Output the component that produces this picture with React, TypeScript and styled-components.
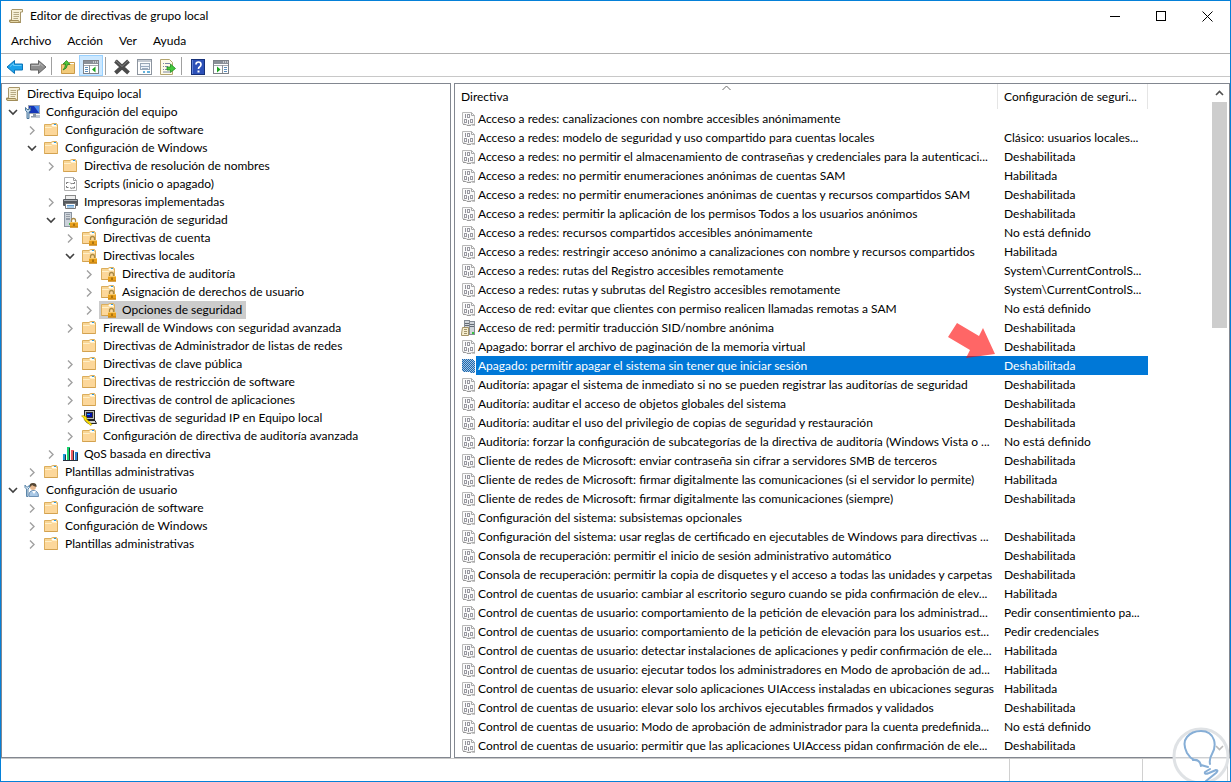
import React from "react";
import styled, { createGlobalStyle, css } from "styled-components";

const UI_FONT = 'Lato, "Noto Sans", sans-serif';

const GlobalStyle = createGlobalStyle`
  *, *::before, *::after { box-sizing: border-box; }
  body { margin: 0; background: #fff; }
  body, button { font-family: ${UI_FONT}; font-size: 12px; line-height: 18px; color: #000; }
  button { margin: 0; padding: 0; border: 0; background: transparent; }
  svg { display: block; flex: none; }
`;

const Window = styled.main`
  position: relative;
  display: flex;
  flex-direction: column;
  min-height: 100vh;
  overflow: hidden;
  border: 1px solid #0580d8;
  background: #fff;
`;

const TitleBar = styled.header`
  display: flex;
  align-items: center;
  height: 30px;
  padding-left: 7px;
`;

const Title = styled.h1`
  flex: 1;
  margin: 0 0 0 6px;
  font-size: 12px;
  font-weight: 400;
`;

const CaptionButton = styled.button`
  display: grid;
  place-items: center;
  width: 46px;
  height: 30px;
`;

const MenuBar = styled.nav`
  display: flex;
  align-items: flex-start;
  height: 23px;
  padding: 1px 0 0 2px;
  border-bottom: 1px solid #b0b0b0;
`;

const MenuButton = styled.button`
  padding: 0 8px;
`;

const ToolBar = styled.div`
  display: flex;
  align-items: flex-end;
  height: 23px;
  padding-left: 2px;
  border-bottom: 1px solid #c8c8c8;
`;

const ToolButton = styled.button<{ $active?: boolean }>`
  display: grid;
  place-items: center;
  width: ${(p) => (p.$active ? 24 : 23)}px;
  height: 21px;
  padding-top: 2px;
  border: 1px solid ${(p) => (p.$active ? "#99d1ff" : "transparent")};
  background: ${(p) => (p.$active ? "#cce8ff" : "transparent")};
`;

const ToolSeparator = styled.span`
  width: 1px;
  height: 18px;
  margin: 0 4px 1px 2px;
  background: #a0a0a0;
`;

const Panes = styled.div`
  flex: 1;
  display: grid;
  grid-template-columns: minmax(0, 450px) minmax(0, 1fr);
  gap: 3px;
  padding-top: 6px;
`;

const Pane = styled.section`
  display: flex;
  min-width: 0;
  overflow: hidden;
  border: 1px solid #828790;
`;

const Tree = styled.ul`
  flex: 1;
  margin: 0;
  padding: 1px 0;
  list-style: none;
`;

const TreeItem = styled.li<{ $depth: number }>`
  display: flex;
  align-items: center;
  height: 18px;
  padding-left: ${(p) => (p.$depth ? p.$depth * 19 - 16 : 2)}px;
  white-space: nowrap;
`;

const Expander = styled.button`
  display: grid;
  place-items: center;
  width: 16px;
  height: 18px;
  margin-right: 2px;
`;

const ExpanderGap = styled.span`
  width: 18px;
`;

const NodeButton = styled.button<{ $selected?: boolean }>`
  display: flex;
  align-items: center;
  gap: 6px;
  height: 18px;
  padding: 0 4px 0 1px;
  background: ${(p) => (p.$selected ? "#cccccc" : "transparent")};
`;

const ListArea = styled.div`
  flex: 1;
  min-width: 0;
  overflow: hidden;
`;

const PolicyTable = styled.table`
  width: 100%;
  table-layout: fixed;
  border-collapse: separate;
  border-spacing: 0;
`;

const NameColumn = styled.col`
  width: 543px;
`;

const ValueColumn = styled.col`
  width: 150px;
`;

const HeaderCell = styled.th<{ $empty?: boolean }>`
  position: relative;
  height: 25px;
  padding: 0 6px;
  border-right: ${(p) => (p.$empty ? "0" : "1px solid #e5e5e5")};
  font-weight: 400;
  text-align: left;
  white-space: nowrap;
`;

const SortMark = styled.span`
  position: absolute;
  top: 1px;
  left: 0;
  right: 0;
  display: grid;
  justify-items: center;
`;

const cell = css`
  height: 19px;
  padding: 0;
  white-space: nowrap;
`;

const NameCell = styled.td`
  ${cell}
  position: relative;
`;

const NameBox = styled.div`
  display: flex;
  align-items: center;
  height: 19px;
  padding-left: 6px;
  line-height: 20px;
`;

const Name = styled.span<{ $selected?: boolean }>`
  flex: 1;
  height: 19px;
  padding-left: 2px;
  ${(p) => p.$selected && "background: #0078d7; color: #fff;"}
`;

const ValueCell = styled.td<{ $selected?: boolean }>`
  ${cell}
  padding-left: 6px;
  ${(p) => p.$selected && "background: #0078d7; color: #fff;"}
`;

const Pointer = styled.svg`
  position: absolute;
  z-index: 1;
  right: 2px;
  top: -33px;
`;

const ScrollBar = styled.div`
  display: flex;
  flex-direction: column;
  width: 15px;
  margin-right: 2px;
`;

const ScrollButton = styled.button`
  display: grid;
  place-items: center;
  height: 18px;
`;

const ScrollTrack = styled.div`
  flex: 1;
`;

const ScrollThumb = styled.div`
  height: 35.5%;
  background: #cdcdcd;
`;

const StatusBar = styled.footer`
  display: flex;
  justify-content: flex-end;
  height: 23px;
  border-top: 1px solid #c8c8c8;
  padding-right: 2px;
`;

const StatusCell = styled.span<{ $width: number }>`
  width: ${(p) => p.$width}px;
  border-right: 1px solid #d0d0d0;
`;

const Watermark = styled.svg`
  position: absolute;
  z-index: 2;
  right: 0;
  bottom: -4px;
`;

const ScrollIcon = () => (
  <svg width="16" height="16" viewBox="0 0 16 16">
    <path d="M4 1.5H14.5V4H12.5V14.5H2.5Q1 14.5 1.5 12H3.5V3Q3 2 4 1.5Z" fill="#f6efd6" stroke="#a79668" />
    <path d="M1.5 12.5H10.5Q11 14.5 12.5 14.5H3Q1.5 14.5 1.5 12.5Z" fill="#e5d6a6" stroke="#a08c58" />
    <path d="M5.5 4.5H11M5.5 6.5H11M5.5 8.5H11M5.5 10.5H10" stroke="#b5a984" />
  </svg>
);

const FolderShape = () => (
  <>
    <path d="M1.5 2.5H8L9.5 1.5H13.5L14.5 3V13.5H1.5Z" fill="#f8d595" stroke="#dcae5c" />
    <path d="M9 2.5H13V4H8.5Z" fill="#fff" />
    <path d="M11 2.5H13" stroke="#2b9be0" />
    <path d="M2 5.5H8L9 4.5H14V13H2Z" fill="#fcd79a" />
    <path d="M2 5.5H8.5L9.5 4.5H14" fill="none" stroke="#fff0c8" />
    <path d="M1.5 13.5H14.5" stroke="#d3a250" />
  </>
);

const FolderIcon = () => (
  <svg width="16" height="16" viewBox="0 0 16 16">
    <FolderShape />
  </svg>
);

const LockShape = () => (
  <>
    <path d="M9.5 10V8.500Q9.5 6.5 11.5 6.5T13.5 8.500V10" fill="none" stroke="#a98a45" strokeWidth="1.3" />
    <rect x="8" y="10" width="8" height="5.5" fill="#e9a01c" />
    <path d="M8 10.5H16" stroke="#f8c864" />
    <path d="M8 15H16" stroke="#bb790b" />
    <path d="M12 11.5V14" stroke="#704800" />
  </>
);

const LockFolderIcon = () => (
  <svg width="16" height="16" viewBox="0 0 16 16">
    <FolderShape />
    <LockShape />
  </svg>
);

const ComputerIcon = () => (
  <svg width="16" height="16" viewBox="0 0 16 16">
    <rect x="4.5" y="1.5" width="11" height="8" fill="#1436b8" stroke="#98a2b4" />
    <path d="M10 2H15V9Z" fill="#4c8df0" />
    <path d="M9 10H12V12H14V13.5H7V12H9Z" fill="#8c98a8" />
    <rect x="12" y="11" width="4" height="3" fill="#bcc5d0" />
    <path d="M1.5 3.500V6.500L3 8V14.5H5V8L6.500 6.5V3.500L5 5.500H3Z" fill="#b9d3e8" stroke="#4b7599" />
  </svg>
);

const UserIcon = () => (
  <svg width="16" height="16" viewBox="0 0 16 16">
    <path d="M5 14.5Q4.5 9 9 8.5Q14.5 8.5 14.5 14.5Z" fill="#a9c8e6" stroke="#6d91b5" />
    <path d="M8 9L10 12L12 9" fill="#fff" />
    <circle cx="9" cy="5" r="3" fill="#e7b88e" />
    <path d="M5.5 5Q5 1 9 1T12.5 5Q9 4 8 3Q7 5 5.5 5Z" fill="#544634" />
    <path d="M1 3V5.5L2.5 7V14.5H4V7L5.5 5.5V3L4 5H2.5Z" fill="#d8e8f5" stroke="#5d87aa" />
  </svg>
);

const ScriptIcon = () => (
  <svg width="16" height="16" viewBox="0 0 16 16">
    <path d="M2.5 1.5H11.5L14.5 4.5V14.5H2.5Z" fill="#fff" stroke="#b0b0b0" />
    <path d="M11.5 1.5V4.5H14.5" fill="none" stroke="#9a9a9a" />
    <path d="M4.5 8V6.5H6.5M8 6.5Q9 8.5 10.5 7.5H12.5V6M4.5 10V11.5H6.5M8 11.5Q9 13 10.5 12H12.5V10.5" fill="none" stroke="#777" />
  </svg>
);

const PrinterIcon = () => (
  <svg width="16" height="16" viewBox="0 0 16 16">
    <rect x="3.5" y="1.5" width="10" height="4" fill="#eee" stroke="#8a8a8a" />
    <rect x="1" y="5" width="15" height="7" rx="1" fill="#55595e" />
    <path d="M2 6.5H15" stroke="#a5a9ae" />
    <path d="M3.5 9.5H13.5V14.5H3.5Z" fill="#f8fbff" stroke="#777" />
    <path d="M5 11.5H12M5 13H12" stroke="#5b9bd1" />
  </svg>
);

const ServerShape = () => (
  <>
    <rect x="2.5" y="0.5" width="7" height="14" fill="#cbd2da" stroke="#8b949e" />
    <path d="M4 3H8M4 5H8M4 7H8" stroke="#5f6974" />
    <path d="M4 3.5H8M4 5.5H8" stroke="#fff" strokeOpacity="0.6" />
    <rect x="7" y="11" width="1" height="2" fill="#42b54a" />
  </>
);

const ServerLockIcon = () => (
  <svg width="16" height="16" viewBox="0 0 16 16">
    <ServerShape />
    <LockShape />
  </svg>
);

const IpIcon = () => (
  <svg width="16" height="16" viewBox="0 0 16 16">
    <rect x="3.5" y="0.5" width="10" height="9" fill="#bdbdbd" stroke="#222" />
    <rect x="5.5" y="2.5" width="6" height="5" fill="#0010a8" stroke="#333" />
    <path d="M4 10.5H14L15.5 13.5H7Z" fill="#d2d2d2" stroke="#222" />
    <path d="M0.500 6L3 8V9.5L9.5 15.5L11 14.5L5.500 9V7L2.5 5.5Z" fill="#ffe600" stroke="#b49400" strokeWidth="0.6" />
    <path d="M6 4.5H9" stroke="#1aa6ff" />
  </svg>
);

const BarsIcon = () => (
  <svg width="16" height="16" viewBox="0 0 16 16">
    <rect x="1" y="8" width="3" height="7" fill="#1f9ad6" />
    <rect x="5" y="1" width="3" height="14" fill="#16d36c" />
    <rect x="9" y="4" width="3" height="11" fill="#ef5a62" />
    <rect x="13" y="6" width="3" height="9" fill="#2b83d8" />
    <path d="M3.5 9V15M7.5 2V15M11.5 5V15M15.5 7V15M1 14.5H16" stroke="#26303c" />
  </svg>
);

const PolicyIcon = ({ selected }: { selected?: boolean }) => (
  <svg width="15" height="16" viewBox="0 0 15 16">
    <defs>
      <pattern id="dither" width="2" height="2" patternUnits="userSpaceOnUse">
        <rect width="2" height="2" fill="#a9c3dc" />
        <rect width="1" height="1" fill="#1668b4" />
        <rect x="1" y="1" width="1" height="1" fill="#1668b4" />
      </pattern>
    </defs>
    {selected ? (
      <path d="M1 1H11L14 4V15H10L7 14H3L1 13Z" fill="url(#dither)" shapeRendering="crispEdges" />
    ) : (
      <>
        <path d="M1.5 1.5H10.5L13.5 4.5V14Q12 12.5 9.5 14Q7 15 4.5 13.5L1.5 12.5Z" fill="#fafafa" stroke="#b8b8b8" />
        <path d="M10.5 1.5V4.5H13.5" fill="none" stroke="#a8a8a8" />
        <path d="M2 13.5H5M6 14.5H10M11 14H14" stroke="#9a9a9a" />
        <path d="M4.5 3V7M7.5 9V13" stroke="#92929a" />
        <rect x="6.5" y="3.5" width="2" height="3" fill="none" stroke="#9a9aa2" />
        <rect x="3.5" y="8.5" width="2" height="3" fill="none" stroke="#9a9aa2" />
        <rect x="9.5" y="8.5" width="2" height="3" fill="none" stroke="#9a9aa2" />
      </>
    )}
  </svg>
);

const ServersIcon = () => (
  <svg width="15" height="16" viewBox="0 0 15 16">
    <rect x="3.5" y="0.5" width="5" height="13" fill="#d0d5da" stroke="#858c94" />
    <rect x="8.5" y="1.5" width="5" height="13" fill="#d0d5da" stroke="#858c94" />
    <path d="M4 3.5H8M4 5.5H8M9 4.5H13M9 6.5H13" stroke="#636b74" />
    <rect x="11" y="12" width="2" height="2" fill="#37c43e" />
    <path d="M1.5 7.5H7.5V15.5H0.5V14Z" fill="#f5edcf" stroke="#a39265" />
    <path d="M3 9.5H6M3 11.5H6M3 13.5H6" stroke="#9f9169" />
  </svg>
);

const Chevron = ({ open }: { open?: boolean }) => (
  <svg width="10" height="10" viewBox="0 0 10 10">
    <path
      d={open ? "M1 3L5 7L9 3" : "M3 1.500L7 5.500L3 9.500"}
      fill="none"
      stroke={open ? "#404040" : "#a0a0a0"}
      strokeWidth={open ? 1.6 : 1.4}
    />
  </svg>
);

const ArrowIcon = ({ back }: { back?: boolean }) => (
  <svg width="18" height="16" viewBox="0 0 18 16">
    <path
      d={back ? "M1 8L8.5 1.5V5H16.5V11H8.5V14.5Z" : "M17 8L9.5 1.5V5H1.5V11H9.5V14.5Z"}
      fill={back ? "#1ba1ea" : "#8e8e8e"}
      stroke={back ? "#0c74b8" : "#666"}
    />
    <path d={back ? "M4 7.5L7.5 4.5V6.5H15.5" : "M2.5 6.5H10.5V4L14 7.5"} fill="none" stroke={back ? "#68cbfa" : "#bcbcbc"} />
  </svg>
);

const UpFolderIcon = () => (
  <svg width="16" height="16" viewBox="0 0 16 16">
    <path d="M1.5 5.5H7L9 3.5H14.5V14.5H1.5Z" fill="#f2cb7c" stroke="#c99a49" />
    <path d="M10 4.5H14" stroke="#fff" />
    <path d="M3 11Q7 10 7.5 5.5H10L6.5 1.5L3 5H5.5Q5.5 8.5 3 11Z" fill="#4fc83a" stroke="#26801d" strokeWidth="0.8" />
  </svg>
);

const ConsoleIcon = ({ flip }: { flip?: boolean }) => (
  <svg width="16" height="14" viewBox="0 0 16 14">
    <rect x="0.5" y="0.5" width="15" height="13" fill="#fff" stroke="#7c8188" />
    <path d="M1 2.5H15" stroke="#8a9098" strokeWidth="3" />
    <path d="M10 2H11M12 2H13M14 2H15" stroke="#fff" />
    <path d="M1 5.5H15" stroke="#a4a9b0" />
    {flip ? (
      <>
        <path d="M9.5 5V13" stroke="#8a9098" />
        <path d="M11 7.5H14M11 9.5H14M11 11.5H14" stroke="#5c8fbd" />
        <path d="M4 6.5L7.5 9.5L4 12.5Z" fill="#1aa51e" />
      </>
    ) : (
      <>
        <path d="M6.5 5V13" stroke="#8a9098" />
        <path d="M2 7.5H5M2 9.5H5M2 11.5H5" stroke="#5c8fbd" />
        <path d="M12.5 6.5L9 9.5L12.5 12.5Z" fill="#1aa51e" />
      </>
    )}
  </svg>
);

const DeleteIcon = () => (
  <svg width="18" height="16" viewBox="0 0 18 16">
    <path d="M2.500 2L15.500 14M15.5 2L2.5 14" stroke="#4b4b4b" strokeWidth="4" />
    <path d="M2.500 1.500L9 7.5L15 2" fill="none" stroke="#808080" />
  </svg>
);

const PropertiesIcon = () => (
  <svg width="16" height="16" viewBox="0 0 16 16">
    <rect x="0.5" y="0.5" width="14" height="15" fill="#fff" stroke="#8c949e" />
    <path d="M1 2H14" stroke="#c4cad2" strokeWidth="2" />
    <rect x="3.5" y="4.5" width="9" height="6" fill="#eef3f9" stroke="#98a6b6" />
    <path d="M3 7.5H12M5 9.5H11" stroke="#9aabc0" />
    <path d="M6 13H8M10 13H13" stroke="#64b2dc" strokeWidth="2" />
  </svg>
);

const ExportIcon = () => (
  <svg width="16" height="16" viewBox="0 0 16 16">
    <path d="M0.5 0.5H9.5L12.5 3.5V15.5H0.5Z" fill="#fffbe8" stroke="#b3a56f" />
    <path d="M3 4.5H4M5 4.5H10M3 7.5H4M5 7.5H8M3 10.5H4M5 10.5H8M3 13H10" stroke="#7d86a5" />
    <path d="M7 8H10.5V5L15.5 9.5L10.5 13.5V11H7Z" fill="#43c93c" stroke="#218c1f" strokeWidth="0.8" />
  </svg>
);

const HelpIcon = () => (
  <svg width="14" height="16" viewBox="0 0 14 16">
    <rect x="0.5" y="0.5" width="13" height="15" fill="#2c50b8" stroke="#173179" />
    <path d="M1.5 1V15" stroke="#6586d8" />
    <path d="M5 5.5Q5 3 7.5 3T10 5.5Q10 7 8.5 8Q7.5 8.5 7.5 10" fill="none" stroke="#fff" strokeWidth="1.7" />
    <rect x="6.5" y="11.5" width="2" height="2" fill="#fff" />
  </svg>
);

type IconKind = "scroll" | "folder" | "lock" | "computer" | "user" | "script" | "printer" | "server" | "ip" | "bars";

const nodeIcons: Record<IconKind, React.FC> = {
  scroll: ScrollIcon,
  folder: FolderIcon,
  lock: LockFolderIcon,
  computer: ComputerIcon,
  user: UserIcon,
  script: ScriptIcon,
  printer: PrinterIcon,
  server: ServerLockIcon,
  ip: IpIcon,
  bars: BarsIcon,
};

type TreeNode = { depth: number; icon: IconKind; label: string; state?: "open" | "closed"; selected?: boolean };

const nodes: TreeNode[] = [
  { depth: 0, icon: "scroll", label: "Directiva Equipo local" },
  { depth: 1, icon: "computer", label: "Configuración del equipo", state: "open" },
  { depth: 2, icon: "folder", label: "Configuración de software", state: "closed" },
  { depth: 2, icon: "folder", label: "Configuración de Windows", state: "open" },
  { depth: 3, icon: "folder", label: "Directiva de resolución de nombres", state: "closed" },
  { depth: 3, icon: "script", label: "Scripts (inicio o apagado)" },
  { depth: 3, icon: "printer", label: "Impresoras implementadas", state: "closed" },
  { depth: 3, icon: "server", label: "Configuración de seguridad", state: "open" },
  { depth: 4, icon: "lock", label: "Directivas de cuenta", state: "closed" },
  { depth: 4, icon: "lock", label: "Directivas locales", state: "open" },
  { depth: 5, icon: "lock", label: "Directiva de auditoría", state: "closed" },
  { depth: 5, icon: "lock", label: "Asignación de derechos de usuario", state: "closed" },
  { depth: 5, icon: "lock", label: "Opciones de seguridad", state: "closed", selected: true },
  { depth: 4, icon: "folder", label: "Firewall de Windows con seguridad avanzada", state: "closed" },
  { depth: 4, icon: "folder", label: "Directivas de Administrador de listas de redes" },
  { depth: 4, icon: "folder", label: "Directivas de clave pública", state: "closed" },
  { depth: 4, icon: "folder", label: "Directivas de restricción de software", state: "closed" },
  { depth: 4, icon: "folder", label: "Directivas de control de aplicaciones", state: "closed" },
  { depth: 4, icon: "ip", label: "Directivas de seguridad IP en Equipo local", state: "closed" },
  { depth: 4, icon: "folder", label: "Configuración de directiva de auditoría avanzada", state: "closed" },
  { depth: 3, icon: "bars", label: "QoS basada en directiva", state: "closed" },
  { depth: 2, icon: "folder", label: "Plantillas administrativas", state: "closed" },
  { depth: 1, icon: "user", label: "Configuración de usuario", state: "open" },
  { depth: 2, icon: "folder", label: "Configuración de software", state: "closed" },
  { depth: 2, icon: "folder", label: "Configuración de Windows", state: "closed" },
  { depth: 2, icon: "folder", label: "Plantillas administrativas", state: "closed" },
];

const OFF = "Deshabilitada";
const ON = "Habilitada";
const NONE = "No está definido";

const policies: [string, string][] = [
  ["Acceso a redes: canalizaciones con nombre accesibles anónimamente", ""],
  ["Acceso a redes: modelo de seguridad y uso compartido para cuentas locales", "Clásico: usuarios locales..."],
  ["Acceso a redes: no permitir el almacenamiento de contraseñas y credenciales para la autenticaci...", OFF],
  ["Acceso a redes: no permitir enumeraciones anónimas de cuentas SAM", ON],
  ["Acceso a redes: no permitir enumeraciones anónimas de cuentas y recursos compartidos SAM", OFF],
  ["Acceso a redes: permitir la aplicación de los permisos Todos a los usuarios anónimos", OFF],
  ["Acceso a redes: recursos compartidos accesibles anónimamente", NONE],
  ["Acceso a redes: restringir acceso anónimo a canalizaciones con nombre y recursos compartidos", ON],
  ["Acceso a redes: rutas del Registro accesibles remotamente", "System\\CurrentControlS..."],
  ["Acceso a redes: rutas y subrutas del Registro accesibles remotamente", "System\\CurrentControlS..."],
  ["Acceso de red: evitar que clientes con permiso realicen llamadas remotas a SAM", NONE],
  ["Acceso de red: permitir traducción SID/nombre anónima", OFF],
  ["Apagado: borrar el archivo de paginación de la memoria virtual", OFF],
  ["Apagado: permitir apagar el sistema sin tener que iniciar sesión", OFF],
  ["Auditoría: apagar el sistema de inmediato si no se pueden registrar las auditorías de seguridad", OFF],
  ["Auditoría: auditar el acceso de objetos globales del sistema", OFF],
  ["Auditoría: auditar el uso del privilegio de copias de seguridad y restauración", OFF],
  ["Auditoría: forzar la configuración de subcategorías de la directiva de auditoría (Windows Vista o ...", NONE],
  ["Cliente de redes de Microsoft: enviar contraseña sin cifrar a servidores SMB de terceros", OFF],
  ["Cliente de redes de Microsoft: firmar digitalmente las comunicaciones (si el servidor lo permite)", ON],
  ["Cliente de redes de Microsoft: firmar digitalmente las comunicaciones (siempre)", OFF],
  ["Configuración del sistema: subsistemas opcionales", ""],
  ["Configuración del sistema: usar reglas de certificado en ejecutables de Windows para directivas ...", OFF],
  ["Consola de recuperación: permitir el inicio de sesión administrativo automático", OFF],
  ["Consola de recuperación: permitir la copia de disquetes y el acceso a todas las unidades y carpetas", OFF],
  ["Control de cuentas de usuario: cambiar al escritorio seguro cuando se pida confirmación de elev...", ON],
  ["Control de cuentas de usuario: comportamiento de la petición de elevación para los administrad...", "Pedir consentimiento pa..."],
  ["Control de cuentas de usuario: comportamiento de la petición de elevación para los usuarios est...", "Pedir credenciales"],
  ["Control de cuentas de usuario: detectar instalaciones de aplicaciones y pedir confirmación de ele...", ON],
  ["Control de cuentas de usuario: ejecutar todos los administradores en Modo de aprobación de ad...", ON],
  ["Control de cuentas de usuario: elevar solo aplicaciones UIAccess instaladas en ubicaciones seguras", ON],
  ["Control de cuentas de usuario: elevar solo los archivos ejecutables firmados y validados", OFF],
  ["Control de cuentas de usuario: Modo de aprobación de administrador para la cuenta predefinida...", NONE],
  ["Control de cuentas de usuario: permitir que las aplicaciones UIAccess pidan confirmación de ele...", OFF],
];

const SELECTED_POLICY = 13;
const SERVER_POLICY = 11;

export default function App() {
  return (
    <>
      <GlobalStyle />
      <Window>
        <TitleBar>
          <ScrollIcon />
          <Title>Editor de directivas de grupo local</Title>
          <CaptionButton aria-label="Minimizar">
            <svg width="11" height="11" viewBox="0 0 11 11"><path d="M0 5.5H10" stroke="#000" /></svg>
          </CaptionButton>
          <CaptionButton aria-label="Maximizar">
            <svg width="11" height="11" viewBox="0 0 11 11"><rect x="0.5" y="0.5" width="9" height="9" fill="none" stroke="#000" /></svg>
          </CaptionButton>
          <CaptionButton aria-label="Cerrar">
            <svg width="11" height="11" viewBox="0 0 11 11"><path d="M0.5 0.5L10.5 10.5M10.5 0.5L0.5 10.5" stroke="#000" /></svg>
          </CaptionButton>
        </TitleBar>

        <MenuBar>
          {["Archivo", "Acción", "Ver", "Ayuda"].map((m) => (
            <MenuButton key={m}>{m}</MenuButton>
          ))}
        </MenuBar>

        <ToolBar>
          <ToolButton aria-label="Atrás"><ArrowIcon back /></ToolButton>
          <ToolButton aria-label="Adelante"><ArrowIcon /></ToolButton>
          <ToolSeparator />
          <ToolButton aria-label="Subir un nivel"><UpFolderIcon /></ToolButton>
          <ToolButton aria-label="Mostrar árbol" $active><ConsoleIcon /></ToolButton>
          <ToolSeparator />
          <ToolButton aria-label="Eliminar"><DeleteIcon /></ToolButton>
          <ToolButton aria-label="Propiedades"><PropertiesIcon /></ToolButton>
          <ToolButton aria-label="Exportar lista"><ExportIcon /></ToolButton>
          <ToolSeparator />
          <ToolButton aria-label="Ayuda"><HelpIcon /></ToolButton>
          <ToolButton aria-label="Mostrar panel de acciones"><ConsoleIcon flip /></ToolButton>
        </ToolBar>

        <Panes>
          <Pane aria-label="Árbol de consola">
            <Tree>
              {nodes.map((n, i) => {
                const Icon = nodeIcons[n.icon];
                return (
                  <TreeItem key={i} $depth={n.depth}>
                    {n.state && (
                      <Expander aria-label={`${n.state === "open" ? "Contraer" : "Expandir"} ${n.label}`}>
                        <Chevron open={n.state === "open"} />
                      </Expander>
                    )}
                    {!n.state && n.depth > 0 && <ExpanderGap />}
                    <NodeButton $selected={n.selected}>
                      <Icon />
                      {n.label}
                    </NodeButton>
                  </TreeItem>
                );
              })}
            </Tree>
          </Pane>

          <Pane aria-label="Directivas">
            <ListArea>
              <PolicyTable>
                <colgroup>
                  <NameColumn />
                  <ValueColumn />
                  <col />
                </colgroup>
                <thead>
                  <tr>
                    <HeaderCell scope="col">
                      Directiva
                      <SortMark>
                        <svg width="9" height="6" viewBox="0 0 9 6"><path d="M0.5 5L4.5 1L8.5 5" fill="none" stroke="#6d6d6d" /></svg>
                      </SortMark>
                    </HeaderCell>
                    <HeaderCell scope="col">Configuración de seguri...</HeaderCell>
                    <HeaderCell as="td" $empty />
                  </tr>
                </thead>
                <tbody>
                  {policies.map(([name, value], i) => {
                    const selected = i === SELECTED_POLICY;
                    return (
                      <tr key={name}>
                        <NameCell>
                          <NameBox>
                            {i === SERVER_POLICY ? <ServersIcon /> : <PolicyIcon selected={selected} />}
                            <Name $selected={selected}>{name}</Name>
                          </NameBox>
                          {selected && (
                            <Pointer width="48" height="36" viewBox="0 0 48 36" aria-hidden="true">
                              <path d="M9 0L31 13L35 5L47 31L18 35L22 27L0 14Z" fill="#f00" fillOpacity="0.6" />
                            </Pointer>
                          )}
                        </NameCell>
                        <ValueCell $selected={selected}>{value}</ValueCell>
                        <td />
                      </tr>
                    );
                  })}
                </tbody>
              </PolicyTable>
            </ListArea>
            <ScrollBar>
              <ScrollButton aria-label="Desplazar hacia arriba">
                <svg width="9" height="6" viewBox="0 0 9 6"><path d="M1 5L4.5 1.5L8 5" fill="none" stroke="#505050" strokeWidth="1.6" /></svg>
              </ScrollButton>
              <ScrollTrack><ScrollThumb /></ScrollTrack>
              <ScrollButton aria-label="Desplazar hacia abajo">
                <svg width="9" height="6" viewBox="0 0 9 6"><path d="M1 1L4.5 4.5L8 1" fill="none" stroke="#505050" strokeWidth="1.6" /></svg>
              </ScrollButton>
            </ScrollBar>
          </Pane>
        </Panes>

        <StatusBar>
          <StatusCell $width={133} />
          <StatusCell $width={133} />
          <StatusCell $width={85} />
        </StatusBar>

        <Watermark width="58" height="58" viewBox="0 0 58 58" aria-hidden="true">
          <circle cx="29" cy="29" r="27" fill="#fff" fillOpacity="0.6" stroke="#dfe2e5" strokeWidth="3" />
          <path
            d="M22 33Q18 31 15 26Q10 16 15 10Q20 4 29 4Q39 4 42 13Q44 20 40 27Q37 32 38 37M21 33Q28 32 29 39M29 38L36 40M38 42L33 45Q32 48 37 46L44 43Q47 43 44 46L34 54"
            fill="none"
            stroke="#86aed6"
            strokeWidth="2"
            strokeLinejoin="round"
            strokeLinecap="round"
          />
        </Watermark>
      </Window>
    </>
  );
}
